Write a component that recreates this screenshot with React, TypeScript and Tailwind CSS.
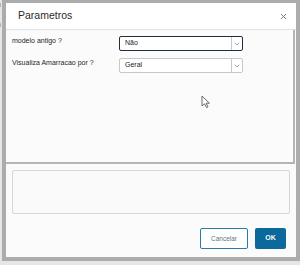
import { ChevronDown, X } from "lucide-react";

// select box used by the two parameter rows
function Select({ value, focused }: { value: string; focused?: boolean }) {
    return (
        <div
            className={`flex h-[15px] w-[124px] items-stretch rounded-[2px] bg-white ${
                focused
                    ? "border-[1.5px] border-[#1e2e3a]"
                    : "border border-[#c8c8c8]"
            }`}
        >
            <div className="flex flex-1 items-center pl-[5px] text-[7px] text-[#1a1a1a]">
                {value}
            </div>
            <div className="flex w-[11px] items-center justify-center border-l border-[#c8c8c8]">
                <ChevronDown size={8} strokeWidth={2} color="#777" />
            </div>
        </div>
    );
}

export default function App() {
    return (
        <div
            className="relative h-[265px] w-[300px] overflow-hidden bg-[#e6e6e6]"
            style={{ fontFamily: '"Liberation Sans", Arial, sans-serif' }}
        >
            {/* ========================================= */}
            {/* PAGE BEHIND (partial text at the left edge) */}
            {/* ========================================= */}

            <div className="absolute left-[-4px] top-[1px] text-[9px] leading-none text-[#c9722a]">
                0
            </div>
            <div className="absolute left-[-4px] top-[21px] text-[9px] leading-none text-[#c9722a]">
                0
            </div>

            {/* ========================================= */}
            {/* DIALOG */}
            {/* ========================================= */}

            <div className="ml-[2px] flex h-[261px] w-[298px] flex-col border-[4px] border-t-[3px] border-[#acacac] bg-[#fbfbfb]">
                {/* HEADER */}
                <div className="flex h-[27px] items-center justify-between border-b border-[#e2e2e2] bg-white pl-[12px] pr-[8px]">
                    <span className="text-[10.5px] text-[#2b2b2b]">Parametros</span>
                    <X size={9} strokeWidth={2.5} color="#6b7884" />
                </div>

                {/* BODY */}
                <div className="flex h-[134px] w-[289px] flex-col gap-[7px] border-b-2 border-r-2 border-[#b5b5b5] bg-[#fbfbfb] pl-[6px] pt-[6px]">
                    <div className="flex items-start">
                        <span className="w-[107px] pt-[1px] text-[7px] leading-[8px] text-[#1f1f1f]">
                            modelo antigo ?
                        </span>
                        <Select value="Não" focused />
                    </div>
                    <div className="flex items-start">
                        <span className="w-[107px] pt-[1px] text-[7px] leading-[8px] text-[#1f1f1f]">
                            Visualiza Amarracao por ?
                        </span>
                        <Select value="Geral" />
                    </div>
                </div>

                {/* FOOTER */}
                <div className="flex flex-1 flex-col px-[6px] pt-[6px]">
                    <div className="h-[44px] w-[278px] rounded-[2px] border border-[#d6d6d6] bg-[#fafafa]" />
                    <div className="mt-[14px] flex justify-end gap-[7px] pr-[4px]">
                        <button className="flex h-[21px] w-[48px] items-center justify-center rounded-[2px] border-[1.5px] border-[#2b7aa6] bg-white text-[6.5px] text-[#5f7483]">
                            Cancelar
                        </button>
                        <button className="flex h-[21px] w-[31px] items-center justify-center rounded-[2px] bg-[#0b699b] text-[7px] font-bold text-white">
                            OK
                        </button>
                    </div>
                </div>
            </div>

            {/* ========================================= */}
            {/* MOUSE CURSOR */}
            {/* ========================================= */}

            <svg
                className="absolute left-[201px] top-[95px]"
                width="10"
                height="14"
                viewBox="0 0 10 14"
            >
                <path
                    d="M1 1 L1 11 L3.5 8.8 L5.5 12.6 L7 11.9 L5.1 8.2 L8.4 8.2 Z"
                    fill="white"
                    stroke="#6a6a6a"
                    strokeWidth="1"
                    strokeLinejoin="round"
                />
            </svg>
        </div>
    );
}
